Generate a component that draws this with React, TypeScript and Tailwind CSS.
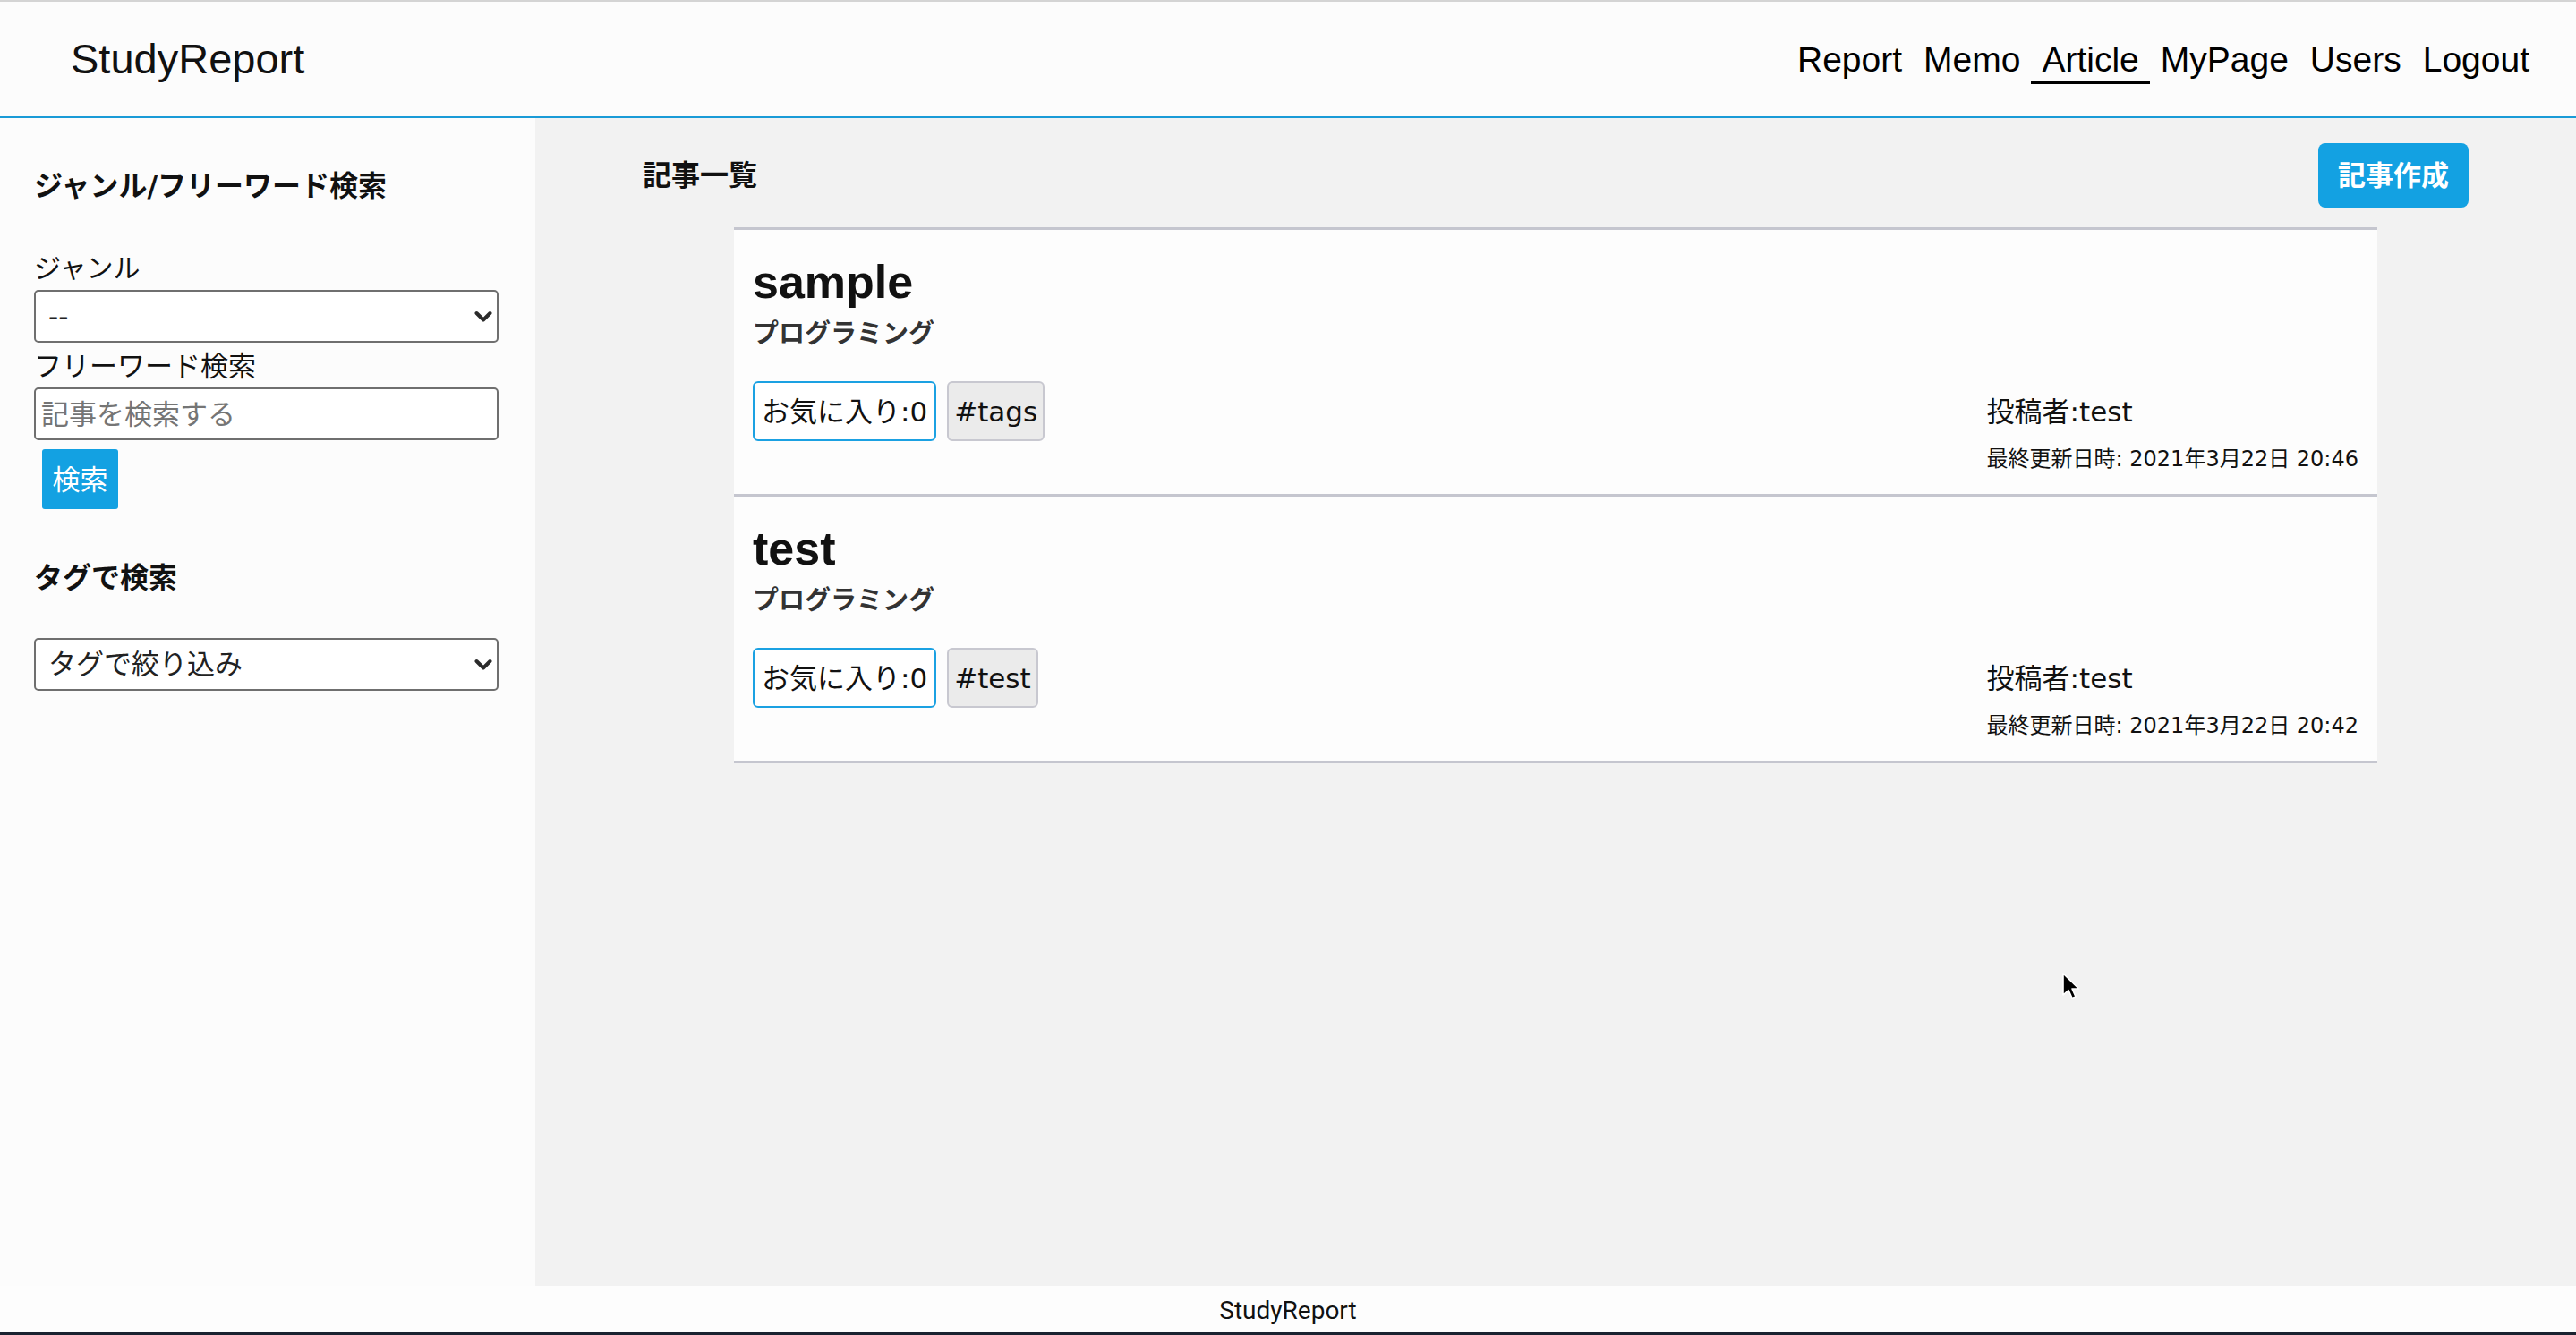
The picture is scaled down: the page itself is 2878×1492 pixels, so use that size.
import React from "react";

const latin = "font-['Liberation_Sans','Noto_Sans_CJK_JP',sans-serif]";

function Chevron() {
  return (
    <svg
      className="pointer-events-none absolute right-[7px] top-1/2 -translate-y-1/2"
      width="20"
      height="13"
      viewBox="0 0 20 13"
    >
      <path d="M2.5 2.5 L10 10 L17.5 2.5" fill="none" stroke="#2b2b2b" strokeWidth="4" strokeLinecap="round" strokeLinejoin="round" />
    </svg>
  );
}

function SelectBox({ value }: { value: string }) {
  return (
    <div className="relative h-[59px] w-[519px]">
      <select
        className="h-full w-full appearance-none rounded-[5px] border-2 border-[#6f6f6f] bg-white pl-[14px] text-[31px] text-[#222] outline-none"
        defaultValue={value}
      >
        <option value={value}>{value}</option>
      </select>
      <Chevron />
    </div>
  );
}

type Article = { title: string; tag: string; date: string };

const articles: Article[] = [
  { title: "sample", tag: "#tags", date: "最終更新日時: 2021年3月22日 20:46" },
  { title: "test", tag: "#test", date: "最終更新日時: 2021年3月22日 20:42" },
];

function Card({ a }: { a: Article }) {
  return (
    <div className="flex justify-between border-t-[3px] border-[#c5c6cf] bg-[#fdfdfd] px-[21px] pb-[23px] pt-[28px] last:border-b-[3px]">
      <div className="pb-[36px]">
        <h3 className={`${latin} text-[52px] font-bold leading-[60px] text-[#111]`}>{a.title}</h3>
        <p className="mt-[9.5px] text-[29px] font-bold leading-[36px] text-[#333]">プログラミング</p>
        <div className="mt-[35.5px] flex gap-[12px]">
          <button className="h-[67px] rounded-[6px] border-2 border-[#1ba1e2] bg-white px-[8px] text-[31px] leading-[40px] text-[#111]">
            お気に入り:0
          </button>
          <button className="h-[67px] rounded-[6px] border-2 border-[#c8c8d0] bg-[#ebebeb] px-[6px] text-[31px] leading-[40px] text-[#111]">
            {a.tag}
          </button>
        </div>
      </div>
      <div className="self-end">
        <p className="text-[31px] leading-[40px] text-[#111]">投稿者:test</p>
        <p className="mt-[17px] text-[24px] leading-[32px] text-[#111]">{a.date}</p>
      </div>
    </div>
  );
}

export default function App() {
  const navItems = ["Report", "Memo", "Article", "MyPage", "Users", "Logout"];
  return (
    <div className="relative flex h-[1492px] w-[2878px] flex-col overflow-hidden bg-[#f2f2f2] font-['DejaVu_Sans','Noto_Sans_CJK_JP',sans-serif] text-[#111]">
      <header className="flex h-[132px] shrink-0 items-start justify-between border-b-2 border-t-2 border-b-[#1a9bd7] border-t-[#d4d4d4] bg-[#fcfcfc]">
        <div className={`${latin} ml-[79px] mt-[36px] text-[47px] leading-[56px] text-[#111]`}>StudyReport</div>
        <nav className={`${latin} mr-[40px] mt-[43px] flex text-[39px] leading-[44px]`}>
          {navItems.map((n) => (
            <a
              key={n}
              className={`block border-b-[3px] px-[12px] pb-[2px] text-black ${n === "Article" ? "border-black" : "border-transparent"}`}
            >
              {n}
            </a>
          ))}
        </nav>
      </header>

      <div className="flex min-h-0 flex-1">
        <aside className="w-[598px] shrink-0 bg-[#fcfcfc] pl-[38px] pr-[41px] pt-[56px]">
          <h2 className="text-[32px] font-bold leading-[40px]">ジャンル/フリーワード検索</h2>
          <div className="mt-[52px] text-[30px] leading-[40px]">ジャンル</div>
          <div className="mt-[4px]">
            <SelectBox value="--" />
          </div>
          <div className="mt-[6px] text-[31px] leading-[40px]">フリーワード検索</div>
          <input
            className="mt-[4px] block h-[59px] w-[519px] rounded-[5px] border-2 border-[#6f6f6f] bg-white pl-[6px] text-[31px] outline-none placeholder:text-[#757575]"
            placeholder="記事を検索する"
          />
          <button className="ml-[9px] mt-[10px] block h-[67px] w-[85px] rounded-[3px] bg-[#13a1e2] text-[31px] leading-[40px] text-white">
            検索
          </button>
          <h2 className="mt-[57px] text-[32px] font-bold leading-[40px]">タグで検索</h2>
          <div className="mt-[47px]">
            <SelectBox value="タグで絞り込み" />
          </div>
        </aside>

        <main className="flex-1 bg-[#f2f2f2] px-[120px] pt-[28px]">
          <div className="flex items-center justify-between">
            <h2 className="text-[32px] font-bold leading-[40px]">記事一覧</h2>
            <button className="h-[72px] w-[168px] rounded-[8px] bg-[#13a1e2] text-[31px] font-bold leading-[40px] text-white">
              記事作成
            </button>
          </div>
          <div className="mx-auto mt-[22px] w-[90%]">
            {articles.map((a) => (
              <Card key={a.title} a={a} />
            ))}
          </div>
        </main>
      </div>

      <footer className="h-[55px] shrink-0 border-b-[3px] border-[#1b2230] bg-[#fdfdfd] pt-[10px] text-center font-['Roboto',sans-serif] text-[28px] leading-[36px] text-[#111]">
        StudyReport
      </footer>

      <svg className="absolute left-[2303px] top-[1086px]" width="24" height="34" viewBox="0 0 24 34">
        <path
          d="M2 2 L2 26 L8 20.5 L12 29.5 L16 28 L12 19 L19.5 19 Z"
          fill="#000"
          stroke="#fff"
          strokeWidth="1.6"
          strokeLinejoin="round"
        />
      </svg>
    </div>
  );
}
